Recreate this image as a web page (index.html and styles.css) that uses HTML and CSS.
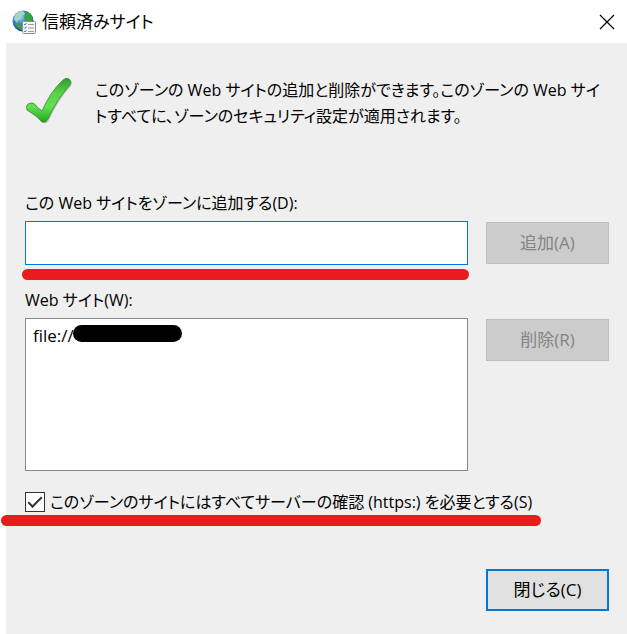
FILE: index.html
```html
<!DOCTYPE html>
<html lang="ja">
  <head>
    <meta charset="UTF-8" />
    <title>信頼済みサイト</title>
    <link rel="stylesheet" href="styles.css">
  </head>
  <body>
    <header class="titlebar">
      <svg class="app-icon" viewBox="0 0 24 24" aria-hidden="true">
        <defs>
          <radialGradient id="globe" cx="0.35" cy="0.3" r="0.75">
            <stop offset="0" stop-color="#9fd4f0" />
            <stop offset="0.5" stop-color="#2f7fc8" />
            <stop offset="1" stop-color="#123a80" />
          </radialGradient>
        </defs>
        <circle cx="11" cy="11" r="10.5" fill="url(#globe)" />
        <path d="M3 5 Q6 1 11 1 L13 4 L10 6 L9 9 L6 10 L5 13 L2 9Z" fill="#a5d3c4" />
        <path d="M14 1 Q19 3 21 9 L19 12 L15 11 L12 8 L13 5Z" fill="#38a43c" />
        <path d="M5 13 L10 15 L10 20 Q5 18 3 14Z" fill="#3f9c50" />
        <rect x="10.5" y="11.5" width="13" height="12" rx="1" fill="#f6f6f6" stroke="#8d8d8d" />
        <path d="M12 14l1 1 1.5-2M12 17.5l1 1 1.5-2M12 21l1 1 1.5-2" fill="none" stroke="#3c7fc4" />
        <path d="M16 14.5h6M16 18h6M16 21.5h6" stroke="#9a9a9a" />
      </svg>
      <h1>信頼済みサイト</h1>
      <button class="close-x" type="button" aria-label="閉じる">
        <svg viewBox="0 0 16 16"><path d="M1 1L15 15M15 1L1 15" stroke="#000" stroke-width="1.2" /></svg>
      </button>
    </header>

    <main class="panel">
      <div class="intro">
        <svg class="check-icon" viewBox="0 0 48 48" aria-hidden="true">
          <defs>
            <linearGradient id="green" x1="0" y1="0" x2="0" y2="1">
              <stop offset="0" stop-color="#2f9e2c" />
              <stop offset="0.35" stop-color="#55d545" />
              <stop offset="0.65" stop-color="#63e052" />
              <stop offset="1" stop-color="#1fa51c" />
            </linearGradient>
          </defs>
          <path d="M3 34Q1 28 8 27Q11 27 13 31L18 36Q26 17 39 5Q42 1 45 3Q48 5 46 9Q33 23 24 43Q22 47 18 46Q11 39 3 34Z" fill="#000" opacity="0.2" />
          <path d="M2 33Q0 27 6 26Q9 25 12 30L17 34Q25 15 38 3Q41 0 44 2Q47 4 45 8Q32 22 23 42Q21 46 17 45Q11 38 2 33Z" fill="url(#green)" stroke="#3b8a38" stroke-width="0.8" />
        </svg>
        <p>このゾーンの Web サイトの追加と削除ができます。このゾーンの Web サイ<br>トすべてに、ゾーンのセキュリティ設定が適用されます。</p>
      </div>

      <!-- 追加するサイト -->
      <label for="site">この Web サイトをゾーンに追加する(D):</label>
      <div class="row">
        <div class="field marked">
          <input type="text" id="site" />
        </div>
        <button type="button" disabled>追加(A)</button>
      </div>

      <!-- 登録済みサイト -->
      <label for="sites">Web サイト(W):</label>
      <div class="row">
        <div class="field">
          <select id="sites" size="5">
            <option>file://</option>
          </select>
          <span class="redacted"></span>
        </div>
        <button type="button" disabled>削除(R)</button>
      </div>

      <div class="https marked">
        <input type="checkbox" id="https" checked />
        <label for="https">このゾーンのサイトにはすべてサーバーの確認 (https:) を必要とする(S)</label>
      </div>

      <div class="footer">
        <button class="primary" type="button">閉じる(C)</button>
      </div>
    </main>
  </body>
</html>
```
FILE: styles.css
```css
*,
*::before,
*::after {
  box-sizing: border-box;
}

body {
  display: flex;
  flex-direction: column;
  min-height: 100vh;
  margin: 0;
  background-color: #fff;
  color: #000;
}

body,
button,
input,
select {
  font-family: "Open Sans", "Noto Sans CJK JP", sans-serif;
  font-size: 16px;
  line-height: 26px;
  font-feature-settings: "palt";
}

.titlebar {
  display: flex;
  align-items: center;
  height: 43px;
  padding: 0 12px;
}

.app-icon {
  width: 24px;
  height: 24px;
  margin-right: 6px;
}

h1 {
  flex: 1;
  margin: 0;
  font-size: 17px;
  font-weight: normal;
}

.close-x {
  width: 16px;
  height: 16px;
  padding: 0;
  border: none;
  background: none;
}

.close-x svg {
  display: block;
}

.panel {
  flex: 1;
  margin-left: 6px;
  padding: 34px 18px 23px 19px;
  background-color: #efefef;
}

.intro {
  display: flex;
  gap: 22px;
  margin-bottom: 61px;
}

.check-icon {
  flex: none;
  width: 48px;
  height: 48px;
}

p {
  margin: 0;
  white-space: nowrap;
}

.panel > label {
  display: block;
  margin-bottom: 5px;
}

.row {
  display: grid;
  grid-template-columns: 1fr 123px;
  gap: 18px;
  margin-bottom: 18px;
}

.row + label {
  padding-top: 4px;
}

.row button {
  margin-top: 1px;
}

.field {
  position: relative;
}

.field input,
select {
  display: block;
  width: 100%;
  height: 44px;
  padding: 0 8px;
  border: 1px solid #0078d7;
  border-radius: 0;
  background-color: #fff;
  outline: none;
}

select {
  height: 153px;
  padding: 5px 0;
  border-color: #828790;
  font-size: 17px;
  overflow: hidden;
}

option {
  padding: 0 7px;
  color: #000;
}

.panel button {
  width: 123px;
  height: 42px;
  padding: 0;
  border: 1px solid #bfbfbf;
  background-color: #ccc;
  color: #838383;
  font-size: 17px;
}

.panel .primary {
  border: 2px solid #0078d7;
  background-color: #e1e1e1;
  color: #000;
}

.redacted {
  position: absolute;
  top: 7px;
  left: 48px;
  width: 109px;
  height: 17px;
  border-radius: 9px;
  background-color: #000;
}

/* 赤い下線 */
.marked::after {
  content: "";
  position: absolute;
  top: 48px;
  left: -3px;
  right: -1px;
  height: 11px;
  border-radius: 6px;
  background-color: #e81c1c;
}

.https {
  display: flex;
  position: relative;
  align-items: center;
  width: fit-content;
  gap: 5px;
}

.https.marked::after {
  top: 26px;
  left: -24px;
  right: -9px;
}

.https input {
  appearance: none;
  width: 20px;
  height: 20px;
  margin: 0;
  border: 1px solid #333;
  background-color: #fff;
}

.https input:checked::before {
  content: "";
  display: block;
  width: 14px;
  height: 7px;
  margin: 4px 2px;
  border: solid #333;
  border-width: 0 0 2px 2px;
  transform: rotate(-45deg);
}

.footer {
  display: flex;
  justify-content: flex-end;
  margin-top: 54px;
}
```
